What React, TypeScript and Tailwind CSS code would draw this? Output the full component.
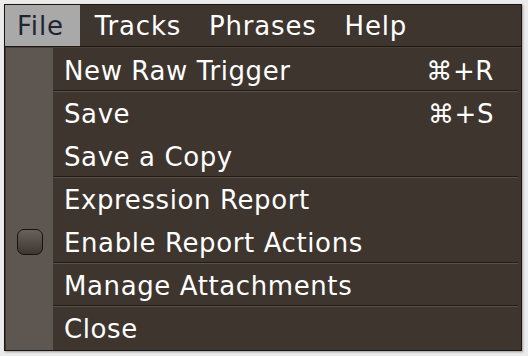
import React from 'react';

type Item = { label: string; shortcut?: string; check?: boolean; sepAfter?: boolean };

const items: Item[] = [
  { label: 'New Raw Trigger', shortcut: '⌘+R', sepAfter: true },
  { label: 'Save', shortcut: '⌘+S' },
  { label: 'Save a Copy', sepAfter: true },
  { label: 'Expression Report' },
  { label: 'Enable Report Actions', check: true, sepAfter: true },
  { label: 'Manage Attachments', sepAfter: true },
  { label: 'Close' },
];

const menus = ['File', 'Tracks', 'Phrases', 'Help'];

export default function App() {
  return (
    <div
      className="w-[528px] h-[356px] bg-[#ebebeb] p-[4px] pr-[6px] pb-[5px] overflow-hidden"
      style={{ fontFamily: '"DejaVu Sans", Verdana, sans-serif' }}
    >
      <div className="h-full flex flex-col bg-[#3e352e] border border-[#1c1713] shadow-[1px_1px_2px_rgba(0,0,0,0.35)]">
        {/* menu bar */}
        <div className="h-[42px] flex items-stretch border-b border-[#1c1713] text-[26px] tracking-[0.8px] text-white">
          {menus.map((m, i) => (
            <div
              key={m}
              className={
                i === 0
                  ? 'flex items-center pt-[2px] pl-[12px] pr-[16px] bg-[#a9a9a9] text-[#1f2530]'
                  : 'flex items-center pt-[2px] pl-[15px] pr-[13px]'
              }
            >
              {m}
            </div>
          ))}
        </div>
        {/* menu body */}
        <div className="flex-1 flex border-t border-[#4a413a] ml-[1px]">
          <div className="w-[47px] bg-[#5e5651] flex flex-col">
            {items.map((it) => (
              <div key={it.label} className="h-[43px] flex items-center justify-center">
                {it.check && (
                  <div className="w-[26px] h-[26px] rounded-[7px] border border-[#17120f] bg-gradient-to-b from-[#6a615b] to-[#3f3631]" />
                )}
              </div>
            ))}
          </div>
          <div className="flex-1 flex flex-col pr-[3px]">
            {items.map((it) => (
              <div
                key={it.label}
                className={
                  it.sepAfter
                    ? 'h-[43px] flex items-center justify-between pt-[4px] pl-[11px] pr-[24px] text-[26px] tracking-[0.6px] text-white border-b border-[#221c17] shadow-[0_1px_0_#5a514a]'
                    : 'h-[43px] flex items-center justify-between pt-[4px] pl-[11px] pr-[24px] text-[26px] tracking-[0.6px] text-white'
                }
              >
                <span>{it.label}</span>
                {it.shortcut && <span>{it.shortcut}</span>}
              </div>
            ))}
          </div>
        </div>
      </div>
    </div>
  );
}
